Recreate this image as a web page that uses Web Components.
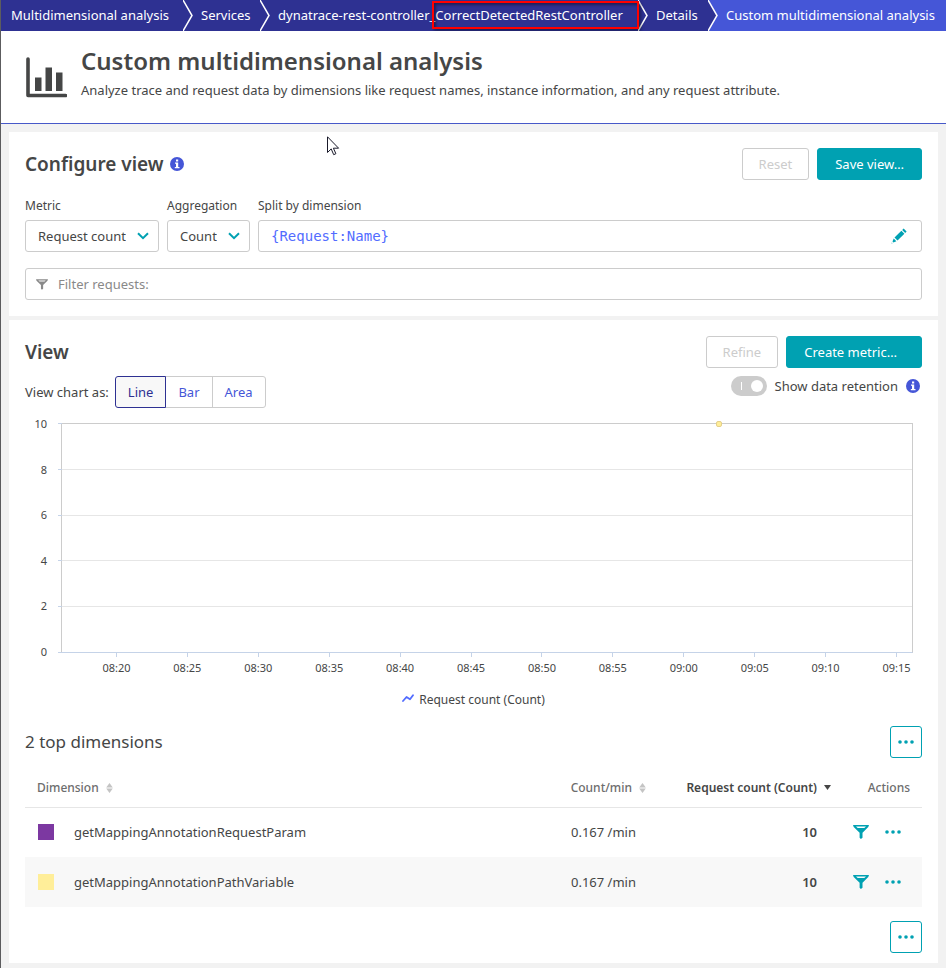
<!DOCTYPE html>
<html lang="en">
<head>
<meta charset="utf-8">
<title>Custom multidimensional analysis</title>
<style>
  html { background: #f2f2f2; }
  body {
    margin: 0; min-height: 100vh; box-sizing: border-box;
    border-left: 1px solid #5c5c5e; background: #f2f2f2; color: #454646;
    font: 13px/20px "Noto Sans", "Open Sans", sans-serif;
    --teal: #00a1b2; --navy: #2e3192; --blue: #4556d7; --line: #cccccc;
  }
  main { display: flex; flex-direction: column; gap: 4px; padding: 8px 8px 5px; }
</style>
</head>
<body>
<mda-breadcrumbs>
  <mda-crumb>Multidimensional analysis</mda-crumb>
  <mda-crumb>Services</mda-crumb>
  <mda-crumb>dynatrace-rest-controller<mda-highlight>_CorrectDetectedRestController</mda-highlight></mda-crumb>
  <mda-crumb next="active">Details</mda-crumb>
  <mda-crumb active>Custom multidimensional analysis</mda-crumb>
</mda-breadcrumbs>
<mda-page-header>
  <span slot="title">Custom multidimensional analysis</span>
  Analyze trace and request data by dimensions like request names, instance information, and any request attribute.
</mda-page-header>
<main>
  <mda-card>
    <span slot="title">Configure view</span>
    <mda-info slot="hint" label="About configuring the view"></mda-info>
    <mda-button slot="actions" kind="disabled">Reset</mda-button>
    <mda-button slot="actions" kind="primary">Save view…</mda-button>
    <mda-query-form></mda-query-form>
  </mda-card>
  <mda-card>
    <span slot="title">View</span>
    <mda-button slot="actions" kind="disabled">Refine</mda-button>
    <mda-button slot="actions" kind="primary menu">Create metric…</mda-button>
    <mda-view-options></mda-view-options>
    <mda-chart></mda-chart>
    <mda-dimensions></mda-dimensions>
  </mda-card>
</main>
<mda-pointer></mda-pointer>
<script>
const ICONS = {
  chart: ['0 0 42 42', '<path d="M3 3v36.500H40.500" fill="none" stroke="currentColor" stroke-width="3.600" stroke-linecap="round" stroke-linejoin="round"/><path d="M10 21.500h6.500V35H10zM20.500 11.500H27V35h-6.500zM31 16.500h6.500V35H31z"/>'],
  info: ['0 0 14 14', '<circle cx="7" cy="7" r="7"/><path fill="#fff" d="M6 2.500h2.200v2H6zM5 5.500h3.200v4.500H9.500v1.300H4.800V10H6V6.800H5z"/>'],
  funnel: ['0 0 16 14', '<path fill-rule="evenodd" d="M0 0h16l-.7 2L9.500 7.800v5L7.900 14 6.600 12.800v-5L.7 2zM3 1.500l1.700 1.600h6.600L13 1.500z"/>'],
  dots: ['0 0 16 16', '<circle cx="2" cy="8" r="1.800"/><circle cx="8" cy="8" r="1.800"/><circle cx="14" cy="8" r="1.800"/>'],
  pencil: ['0 0 16 16', '<path d="M12.600.500 15.600 3.500l-1.400 1.400-3-3zM10.400 2.700l3 3-6.900 6.900-3-3zM2.700 10.600l2.700 2.700-3 1.200-.9-.9zM.9 14.500l.7.700-1.200.400z"/>'],
  chevron: ['0 0 12 8', '<path d="M1 1.300 6 6.200 11 1.300" fill="none" stroke="currentColor" stroke-width="2"/>'],
  sort: ['0 0 7 10', '<path d="M3.500 0 6.800 4.500H.2zM3.500 10 .2 5.500h6.600z"/>'],
  down: ['0 0 7 10', '<path d="M0 2h7L3.500 7z"/>'],
  trend: ['0 0 12 8', '<path d="M1 7 4.500 3 8 5.300 11 1.300" fill="none" stroke="currentColor" stroke-width="1.800" stroke-linecap="round" stroke-linejoin="round"/>']
};
const icon = (name, w, h) => `<svg class="icon ${name}" width="${w}" height="${h}" viewBox="${ICONS[name][0]}" fill="currentColor" aria-hidden="true">${ICONS[name][1]}</svg>`;

const BASE = `
  *, *::before, *::after { box-sizing: border-box; }
  :host { display: block; }
  svg { display: block; flex: none; }
  button, input, select { font: inherit; color: inherit; margin: 0; }
  button { background: none; border: 0; padding: 0; cursor: pointer; }
`;

function define(tag, css, html, setup) {
  customElements.define(tag, class extends HTMLElement {
    constructor() {
      super();
      this.attachShadow({ mode: 'open' });
    }
    connectedCallback() {
      this.shadowRoot.innerHTML = `<style>${BASE}${css}</style>${typeof html === 'function' ? html(this) : html}`;
      if (setup) setup(this);
    }
  });
}

/* Navigation */
define('mda-breadcrumbs', `
  :host { background: var(--blue); overflow: hidden; }
  nav { display: grid; grid-template-columns: 192fr 77fr 378fr 70fr 228fr; height: 31px; }
`, `<nav aria-label="Breadcrumb"><slot></slot></nav>`);

define('mda-crumb', `
  :host { display: flex; justify-content: space-between; color: #fff; background: var(--navy); white-space: nowrap; }
  :host([active]) { background: var(--blue); }
  a { color: inherit; text-decoration: none; line-height: 30px; padding-left: 8px; }
  :host(:first-child) a { padding-left: 10px; }
  svg { background: var(--navy); }
  :host([next="active"]) svg { background: var(--blue); }
`, el => `<a href="#"><slot></slot></a>${el.hasAttribute('active') ? '' :
  `<svg width="10" height="31" viewBox="0 0 10 31"><path d="M0 0 9 15.500 0 31z" fill="#2e3192"/><path d="M0 0 9 15.500 0 31" fill="none" stroke="#fff" stroke-width="1.500"/></svg>`}`);

define('mda-highlight', `
  :host { display: inline-block; position: relative; }
  i { position: absolute; inset: 1px -16px 1px 2px; border: 2px solid #f00; pointer-events: none;
      box-shadow: 2px 2px 3px #0006, inset 2px 2px 3px #0006; }
`, `<slot></slot><i></i>`);

define('mda-page-header', `
  header { display: flex; gap: 14px; height: 93px; padding: 16px 24px; background: #fff; border-bottom: 1px solid #4759c9; }
  .chart { margin-top: 9px; }
  h1 { margin: 0; font-size: 24px; line-height: 28px; font-weight: 600; }
  p { margin: 5px 0 0; line-height: 20px; }
`, `<header>${icon('chart', 42, 42)}<div><h1><slot name="title"></slot></h1><p><slot></slot></p></div></header>`);

define('mda-card', `
  section { background: #fff; padding: 16px; }
  header { display: flex; align-items: center; gap: 8px; min-height: 32px; }
  h2 { margin: 0; font-size: 19px; line-height: 32px; font-weight: 600; }
  .actions { display: flex; gap: 8px; margin-left: auto; }
  .title { display: flex; align-items: center; gap: 6px; }
  :host(:last-child) section { padding-bottom: 10px; }
`, `<section><header><div class="title"><h2><slot name="title"></slot></h2><slot name="hint"></slot></div><div class="actions"><slot name="actions"></slot></div></header><slot></slot></section>`);

define('mda-info', `
  button { display: block; color: var(--blue); }
`, el => `<button type="button" aria-label="${el.getAttribute('label')}">${icon('info', 14, 14)}</button>`);

define('mda-button', `
  button { display: block; height: 32px; padding: 0 16px; border: 1px solid var(--line); border-radius: 3px; background: #fff; white-space: nowrap; }
  .disabled { color: #cccccc; }
  .primary { padding: 0 17px; background: var(--teal); border-color: var(--teal); color: #fff; }
  .menu { padding-right: 24px; }
  .more { width: 32px; padding: 0 7px; border-color: var(--teal); color: var(--teal); }
`, el => {
  const kind = el.getAttribute('kind');
  return kind === 'more'
    ? `<button type="button" class="more" aria-label="More">${icon('dots', 16, 16)}</button>`
    : `<button type="button" class="${kind}" ${kind === 'disabled' ? 'disabled' : ''}><slot></slot></button>`;
});

/* Metric, aggregation, split and filter fields */
define('mda-query-form', `
  .fields { display: flex; gap: 8px; margin-top: 18px; }
  .field { display: flex; flex-direction: column; gap: 6px; }
  .field > label { font-size: 12px; line-height: 16px; }
  .wide { flex: 1; }
  .box { position: relative; display: flex; align-items: center; height: 32px; border: 1px solid var(--line); border-radius: 3px; background: #fff; }
  .box svg.chevron { position: absolute; right: 9px; color: var(--teal); pointer-events: none; }
  select { appearance: none; border: 0; background: none; width: 100%; height: 30px; padding: 0 32px 0 12px; }
  input { flex: 1; min-width: 0; border: 0; background: none; height: 30px; padding: 0 12px; outline: 0; }
  .code { font-family: "DejaVu Sans Mono", monospace; font-size: 14px; color: #526cff; }
  .edit { color: var(--teal); padding: 0 14px; }
  .filter { margin-top: 16px; padding-left: 10px; color: #898989; }
  .filter input { padding-left: 10px; }
  .filter input::placeholder { color: #898989; opacity: 1; }
`, `
  <div class="fields">
    <div class="field"><label for="metric">Metric</label><div class="box"><select id="metric"><option>Request count</option></select>${icon('chevron', 12, 8)}</div></div>
    <div class="field"><label for="agg">Aggregation</label><div class="box"><select id="agg"><option>Count</option></select>${icon('chevron', 12, 8)}</div></div>
    <div class="field wide"><label for="split">Split by dimension</label><div class="box"><input id="split" class="code" value="{Request:Name}" spellcheck="false"><button class="edit" type="button" aria-label="Edit dimension">${icon('pencil', 16, 16)}</button></div></div>
  </div>
  <div class="box filter">${icon('funnel', 12, 11)}<input aria-label="Filter requests" placeholder="Filter requests:"></div>`);

define('mda-view-options', `
  :host { margin-top: 8px; }
  .bar { display: flex; align-items: flex-start; justify-content: space-between; }
  .left { display: flex; align-items: center; gap: 6px; }
  .seg { display: flex; }
  .seg label { display: grid; place-items: center; height: 32px; padding: 0 12px; border: 1px solid var(--line); margin-left: -1px; color: var(--blue); cursor: pointer; }
  .seg label:first-child { border-radius: 3px 0 0 3px; margin-left: 0; }
  .seg label:last-child { border-radius: 0 3px 3px 0; }
  .seg label:has(:checked) { border-color: var(--navy); background: #f8f8f8; color: var(--navy); z-index: 1; }
  .seg input { position: absolute; appearance: none; width: 0; height: 0; }
  .right { display: flex; align-items: center; gap: 8px; padding-right: 2px; }
  .switch { display: flex; align-items: center; gap: 8px; }
  .switch input { appearance: none; position: relative; width: 36px; height: 20px; border-radius: 10px; background: var(--line); }
  .switch input::before { content: ""; position: absolute; left: 10px; top: 6px; width: 1px; height: 8px; background: #fff; }
  .switch input::after { content: ""; position: absolute; right: 4px; top: 4px; width: 12px; height: 12px; border-radius: 50%; background: #fff; }
`, `<div class="bar">
    <div class="left" role="radiogroup" aria-labelledby="as"><span id="as">View chart as:</span>
      <div class="seg"><label><input type="radio" name="t" checked>Line</label><label><input type="radio" name="t">Bar</label><label><input type="radio" name="t">Area</label></div></div>
    <div class="right"><label class="switch"><input type="checkbox" role="switch" disabled>Show data retention</label><mda-info label="About data retention"></mda-info></div>
  </div>`);

/* Chart: the value axis and the plot share a row, the time axis lies under the plot */
define('mda-chart', `
  :host { margin-top: 15px; font-size: 11px; line-height: 14px; }
  .grid { display: grid; grid-template-columns: 22px 1fr; column-gap: 14px; padding-right: 9px; }
  .values { display: flex; flex-direction: column; justify-content: space-between; margin: -6px 0; text-align: right; }
  .plot { position: relative; height: 230px; border: 1px solid var(--line); border-bottom-color: #c5d3e8; display: flex; flex-direction: column; }
  .plot span { flex: 1; position: relative; border-bottom: 1px solid #e6e6e6; }
  .plot span:last-of-type { border-bottom: 0; }
  .plot span::before, .plot::before { content: ""; position: absolute; left: -4px; bottom: -1px; width: 4px; height: 1px; background: #c5d3e8; }
  .plot::before { top: -1px; }
  .point { position: absolute; left: 77.300%; top: -3px; width: 6px; height: 6px; margin-left: -3px; border-radius: 2px; background: #ffee99; border: 1px solid #e5d08a; }
  .times { grid-column: 2; display: grid; grid-template-columns: repeat(12, 1fr); margin: 0 -19px 0 20px; text-align: center; }
  .times div::before { content: ""; display: block; width: 1px; height: 4px; margin: 0 auto 4px; background: #c5d3e8; }
  .legend { display: flex; justify-content: center; align-items: center; gap: 5px; margin-top: 15px; font-size: 12px; line-height: 20px; }
  .trend { color: #526cff; margin-top: -5px; }
`, `<div class="grid">
    <div class="values">${[10, 8, 6, 4, 2, 0].map(v => `<div>${v}</div>`).join('')}</div>
    <div class="plot">${'<span></span>'.repeat(5)}<i class="point"></i></div>
    <div class="times">${['08:20','08:25','08:30','08:35','08:40','08:45','08:50','08:55','09:00','09:05','09:10','09:15'].map(t => `<div>${t}</div>`).join('')}</div>
  </div><div class="legend">${icon('trend', 12, 8)}<span>Request count (Count)</span></div>`);

define('mda-dimensions', `
  :host { margin-top: 16px; }
  .head { display: flex; justify-content: space-between; align-items: center; }
  h3 { margin: 0; font-size: 17px; line-height: 32px; font-weight: 400; }
  table { width: 100%; margin: 12px 0 14px; border-collapse: collapse; table-layout: fixed; }
  th { height: 37px; padding: 0; border-bottom: 1px solid #e6e6e6; color: #6d6d6d; font-size: 12px; font-weight: 500; text-align: right; }
  td { height: 50px; padding: 0; text-align: right; }
  tbody tr:nth-child(even) { background: #f8f8f8; }
  .dim { text-align: left; padding-left: 12px; }
  .rate { width: 108px; } td.rate { padding-right: 12px; } th.rate { padding-right: 2px; }
  .count { width: 183px; } td.count { padding-right: 14px; font-weight: 600; }
  th.count { color: #454646; font-weight: 600; }
  .act { width: 91px; } th.act { padding-right: 12px; }
  .name { display: flex; align-items: center; gap: 20px; }
  .swatch { width: 16px; height: 16px; margin-left: 1px; background: var(--c); }
  button.sort { display: inline-flex; align-items: center; gap: 7px; }
  svg.sort { color: #c4c4c4; }
  .tools { display: flex; gap: 16px; justify-content: flex-end; align-items: center; padding-right: 21px; color: var(--teal); }
  .foot { display: flex; justify-content: flex-end; }
`, () => {
  const row = (name, color) => `<tr><td class="dim"><div class="name"><i class="swatch" style="--c:${color}"></i>${name}</div></td><td class="rate">0.167 /min</td><td class="count">10</td><td class="act"><div class="tools"><button type="button" aria-label="Filter">${icon('funnel', 16, 14)}</button><button type="button" aria-label="More">${icon('dots', 16, 16)}</button></div></td></tr>`;
  return `<div class="head"><h3>2 top dimensions</h3><mda-button kind="more"></mda-button></div>
  <table><thead><tr><th class="dim"><button class="sort" type="button">Dimension ${icon('sort', 7, 10)}</button></th><th class="rate"><button class="sort" type="button">Count/min ${icon('sort', 7, 10)}</button></th><th class="count"><button class="sort" type="button">Request count (Count) ${icon('down', 7, 10)}</button></th><th class="act">Actions</th></tr></thead>
  <tbody>${row('getMappingAnnotationRequestParam', '#7c38a1')}${row('getMappingAnnotationPathVariable', '#ffee99')}</tbody></table>
  <div class="foot"><mda-button kind="more"></mda-button></div>`;
});

define('mda-pointer', `
  :host { position: absolute; left: 327px; top: 136px; pointer-events: none; }
`, `<svg width="13" height="20" viewBox="0 0 13 20"><path d="M.5.800v15.700l3.700-3.600 2.500 5.800 2.200-1-2.500-5.500h5.200z" fill="#fff" stroke="#1a1a2a"/></svg>`);
</script>
</body>
</html>
